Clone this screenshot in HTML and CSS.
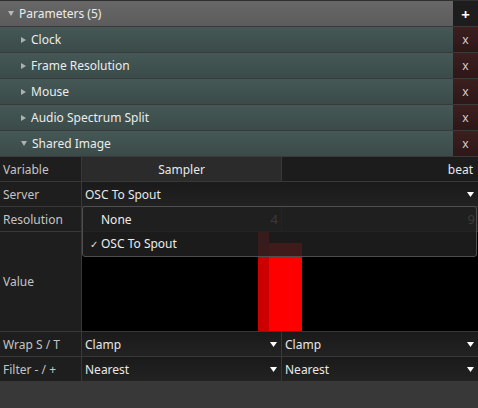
FILE: index.html
```html
<!DOCTYPE html>
<html>
<head>
<meta charset="utf-8">
<link rel="stylesheet" href="styles.css">
</head>
<body>
<div class="panel">
  <div class="row header">
    <div class="name"><svg class="tri" width="6" height="5" viewBox="0 0 6 5"><path d="M0 0H6L3 5Z"/></svg>Parameters (5)</div>
    <div class="btn add">+</div>
  </div>
  <div class="row param">
    <div class="name"><svg class="tri" width="5" height="6" viewBox="0 0 5 6"><path d="M0 0L5 3L0 6Z"/></svg>Clock</div>
    <div class="btn del">x</div>
  </div>
  <div class="row param">
    <div class="name"><svg class="tri" width="5" height="6" viewBox="0 0 5 6"><path d="M0 0L5 3L0 6Z"/></svg>Frame Resolution</div>
    <div class="btn del">x</div>
  </div>
  <div class="row param">
    <div class="name"><svg class="tri" width="5" height="6" viewBox="0 0 5 6"><path d="M0 0L5 3L0 6Z"/></svg>Mouse</div>
    <div class="btn del">x</div>
  </div>
  <div class="row param">
    <div class="name"><svg class="tri" width="5" height="6" viewBox="0 0 5 6"><path d="M0 0L5 3L0 6Z"/></svg>Audio Spectrum Split</div>
    <div class="btn del">x</div>
  </div>
  <div class="row param">
    <div class="name"><svg class="tri" width="6" height="5" viewBox="0 0 6 5"><path d="M0 0H6L3 5Z"/></svg>Shared Image</div>
    <div class="btn del">x</div>
  </div>

  <div class="grid">
    <div class="label">Variable</div>
    <div class="cell sampler">Sampler</div>
    <div class="cell beat">beat</div>

    <div class="label">Server</div>
    <div class="cell combo span2">OSC To Spout<svg class="arrow" width="7" height="5" viewBox="0 0 7 5"><path d="M0 0H7L3.5 5Z"/></svg></div>

    <div class="label">Resolution</div>
    <div class="cell res">4</div>
    <div class="cell res">9</div>

    <div class="label">Value</div>
    <div class="canvas span2">
      <div class="bar dark" style="left:176px;top:0;width:11px"></div>
      <div class="bar bright" style="left:187px;top:11px;width:33px"></div>
    </div>

    <div class="label">Wrap S / T</div>
    <div class="cell combo">Clamp<svg class="arrow" width="7" height="5" viewBox="0 0 7 5"><path d="M0 0H7L3.5 5Z"/></svg></div>
    <div class="cell combo">Clamp<svg class="arrow" width="7" height="5" viewBox="0 0 7 5"><path d="M0 0H7L3.5 5Z"/></svg></div>

    <div class="label">Filter - / +</div>
    <div class="cell combo">Nearest<svg class="arrow" width="7" height="5" viewBox="0 0 7 5"><path d="M0 0H7L3.5 5Z"/></svg></div>
    <div class="cell combo">Nearest<svg class="arrow" width="7" height="5" viewBox="0 0 7 5"><path d="M0 0H7L3.5 5Z"/></svg></div>
  </div>

  <div class="popup">
    <div class="item"><span class="check"></span>None</div>
    <div class="item"><span class="check">✓</span>OSC To Spout</div>
  </div>
</div>
</body>
</html>
```
FILE: styles.css
```css
html, body {
  margin: 0;
  padding: 0;
  background: #383838;
}
body {
  width: 478px;
  height: 408px;
  overflow: hidden;
  font-family: "Noto Sans", "DejaVu Sans", sans-serif;
  font-size: 12px;
}
.panel {
  position: relative;
  width: 478px;
  border-top: 1px solid #303030;
}
.row {
  display: flex;
  height: 25px;
  border-bottom: 1px solid #3a3a3a;
}
.name {
  flex: 1;
  display: flex;
  align-items: center;
  color: #ececec;
}
.header .name {
  background: linear-gradient(#676767, #5c5c5c);
  padding-left: 8px;
}
.header .tri {
  fill: #b8b8b8;
  margin-right: 5px;
}
.param .name {
  background: linear-gradient(#465856, #3a4b49);
  padding-left: 21px;
}
.param .tri {
  fill: #a9b2b1;
  margin-right: 5px;
}
.param:last-of-type .tri {
  margin-left: -1px;
  margin-right: 5px;
}
.btn {
  width: 25px;
  display: flex;
  align-items: center;
  justify-content: center;
}
.add {
  background: #1d1d1d;
  color: #ffffff;
  font-size: 15px;
  font-weight: bold;
}
.del {
  background: linear-gradient(#3c1f1f, #2e1717);
  color: #d8cccc;
  font-size: 12px;
}
.grid {
  display: grid;
  grid-template-columns: 81px 199px 1fr;
  grid-template-rows: 24px 24px 24px 99px 24px 24px;
  gap: 1px;
  background: #383838;
  padding-bottom: 1px;
}
.label {
  background: #1e1e1e;
  color: #c4c4c4;
  display: flex;
  align-items: center;
  padding-left: 3px;
}
.cell {
  display: flex;
  align-items: center;
  color: #e8e8e8;
  background: #1e1e1e;
}
.sampler {
  background: #2b2b2b;
  justify-content: center;
}
.beat {
  background: #1c1c1c;
  justify-content: flex-end;
  padding-right: 5px;
}
.span2 {
  grid-column: 2 / 4;
}
.combo {
  background: linear-gradient(#1a1a1a, #222222);
  padding-left: 3px;
  padding-right: 4px;
}
.arrow {
  fill: #ffffff;
  margin-left: auto;
}
.res {
  justify-content: flex-end;
  padding-right: 3px;
  color: #d0d0d0;
  font-size: 13px;
}
.canvas {
  position: relative;
  background: #000000;
  margin-left: 0;
}
.bar {
  position: absolute;
  bottom: 0;
}
.dark {
  background: #cc0000;
}
.bright {
  background: #ff0000;
}
.popup {
  position: absolute;
  left: 82px;
  top: 205px;
  width: 393px;
  height: 49px;
  border: 1px solid #4e4e4e;
  border-radius: 3px;
  background: rgba(31, 31, 31, 0.86);
  display: flex;
  flex-direction: column;
}
.item {
  height: 24.5px;
  display: flex;
  align-items: center;
  color: #ececec;
}
.check {
  width: 18px;
  padding-left: 7px;
  box-sizing: border-box;
  font-size: 10px;
  color: #e0e0e0;
}
```
